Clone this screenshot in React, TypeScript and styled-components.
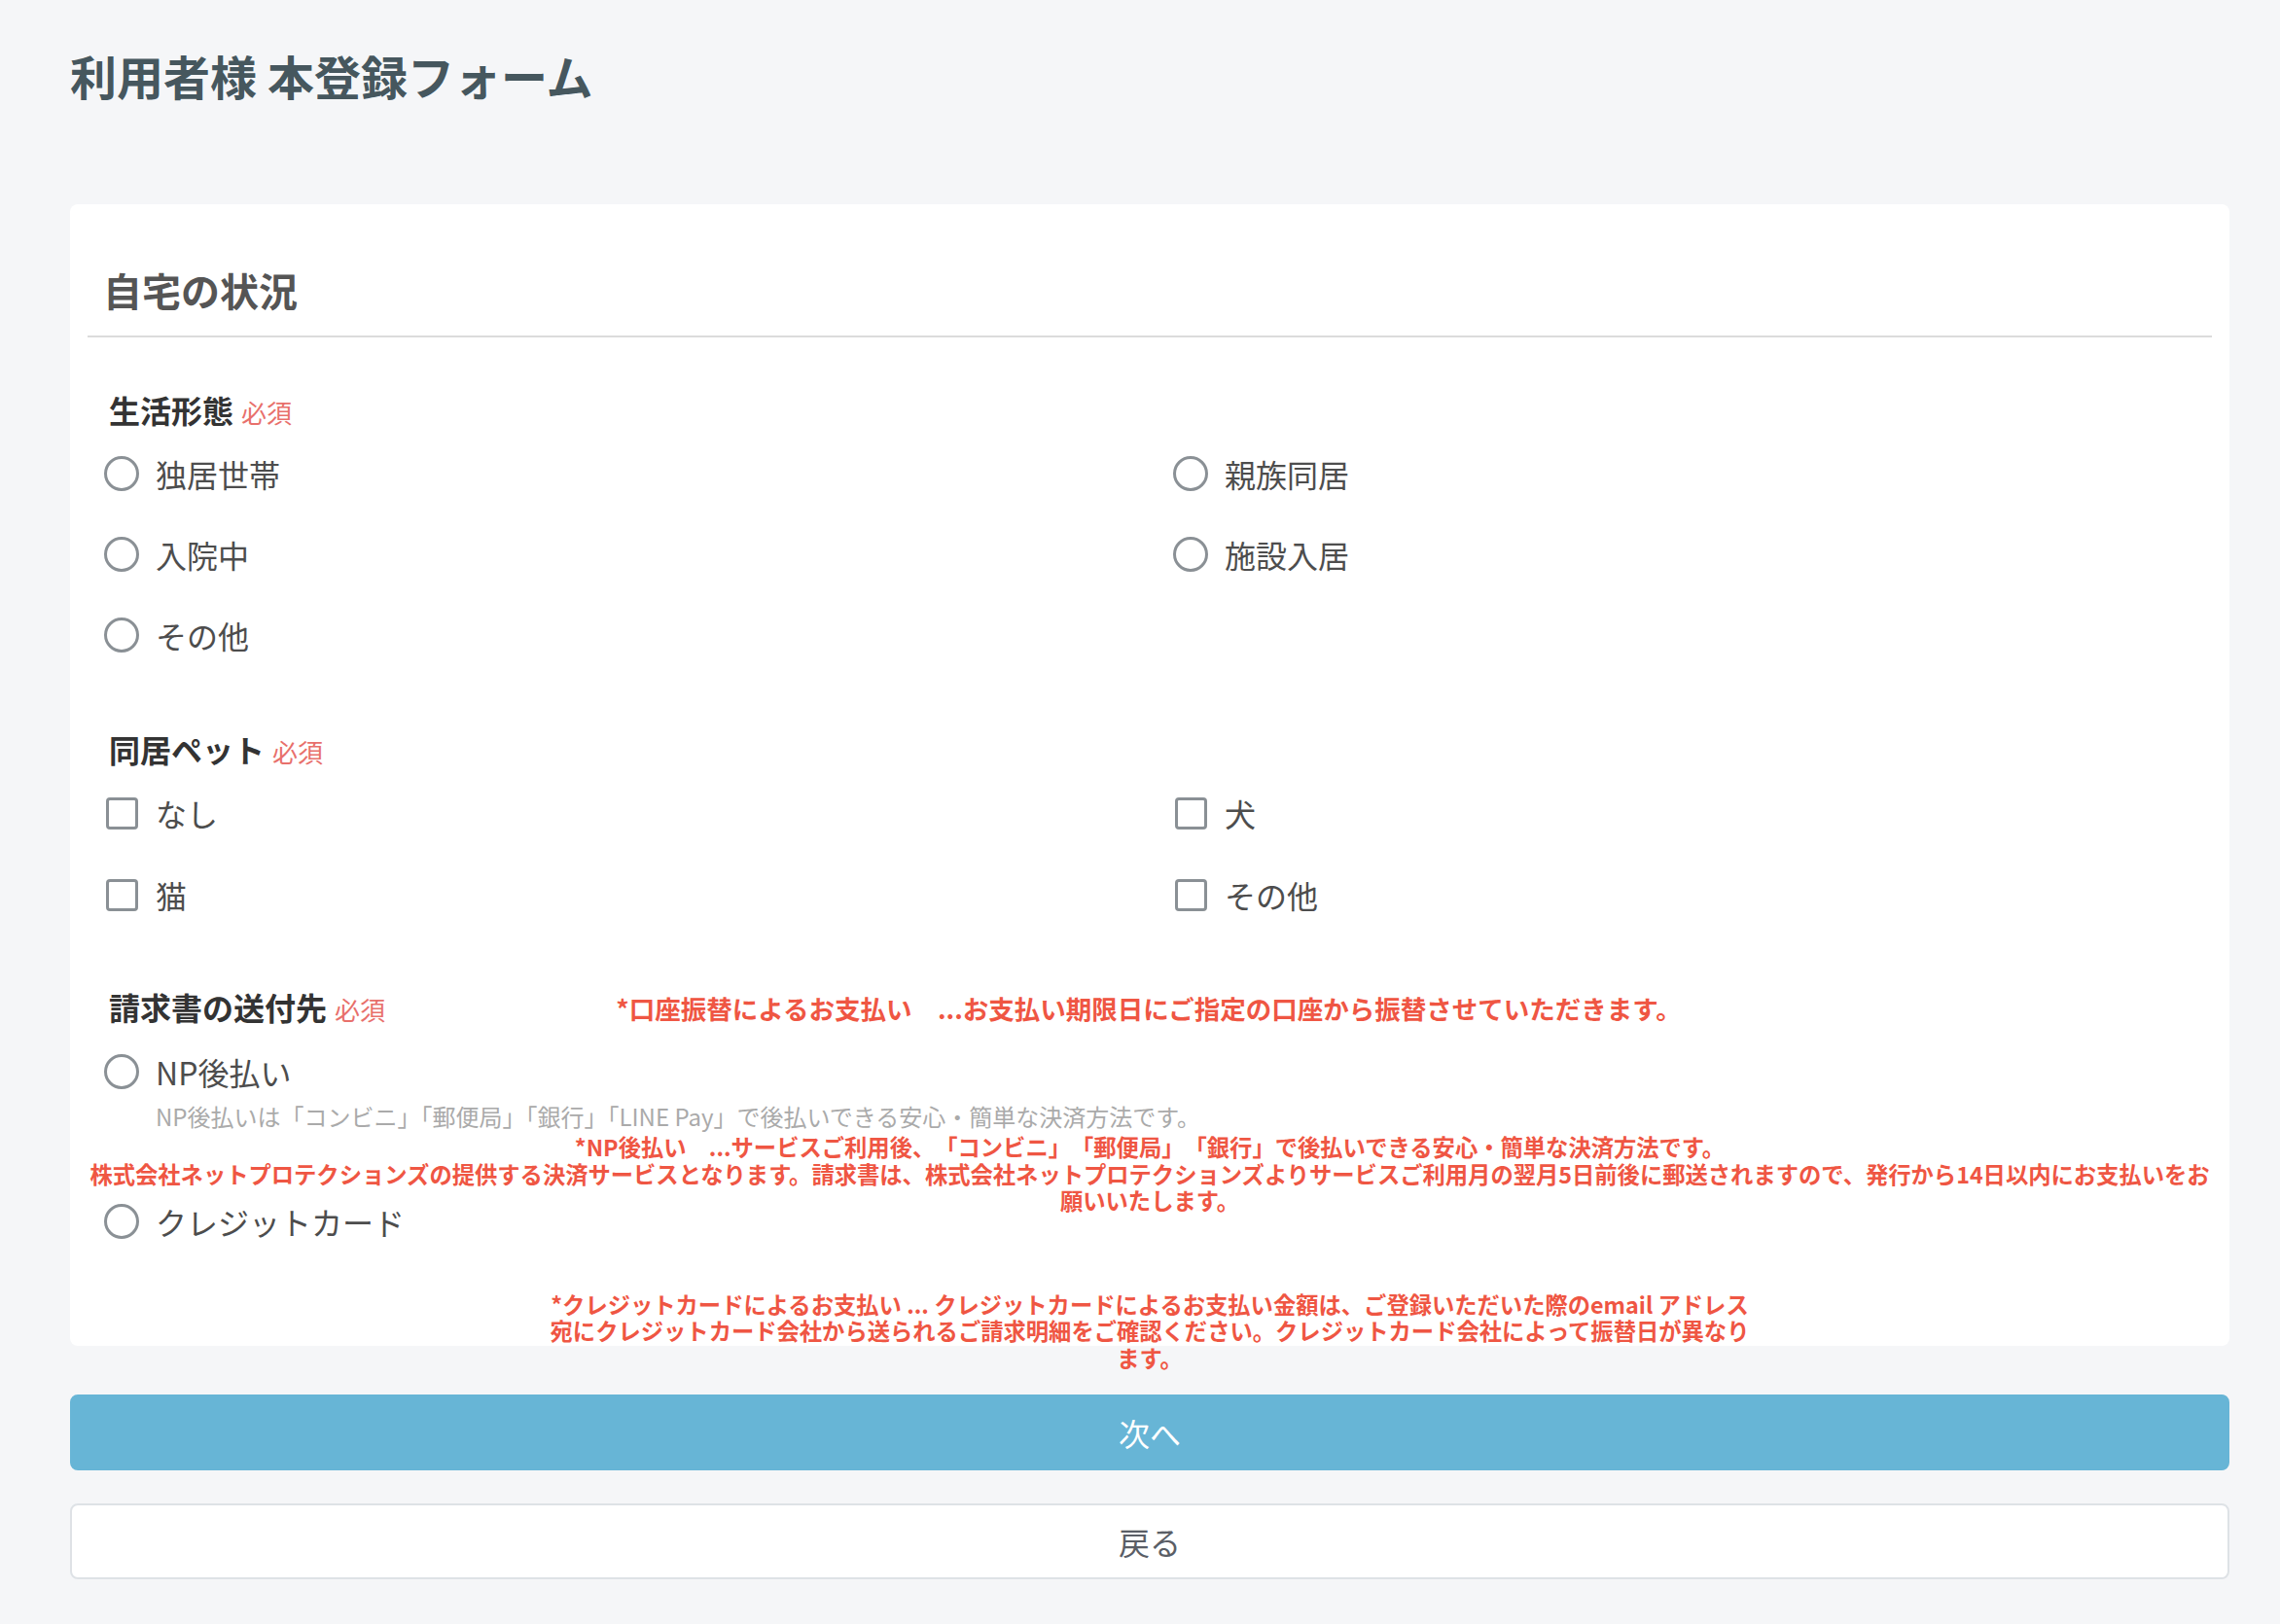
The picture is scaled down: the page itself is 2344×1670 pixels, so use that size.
import styled, { createGlobalStyle } from "styled-components";

const GlobalStyle = createGlobalStyle`
  * {
    box-sizing: border-box;
  }
  body {
    margin: 0;
    background: #f5f6f8;
    font-family: "Noto Sans CJK JP", "Noto Sans", sans-serif;
  }
`;

const Page = styled.div`
  padding: 48px 52px 46px 72px;
`;

const PageTitle = styled.h1`
  margin: 0 0 104px;
  font-size: 48px;
  line-height: 58px;
  font-weight: 700;
  color: #46575e;
`;

const Card = styled.section`
  height: 1174px;
  background: #fff;
  border-radius: 8px;
`;

const CardHeader = styled.div`
  margin: 0 18px;
  padding: 60px 16px 19px;
  border-bottom: 2px solid #dcdcdc;
`;

const CardTitle = styled.h2`
  margin: 0;
  font-size: 40px;
  line-height: 56px;
  font-weight: 700;
  color: #555;
`;

const CardBody = styled.div`
  padding: 0 35px;
`;

const Field = styled.div<{ $mt: number }>`
  margin-top: ${({ $mt }) => $mt}px;
`;

const FieldHead = styled.div`
  display: grid;
  align-items: center;
  margin-bottom: -1px;
  & > * {
    grid-area: 1 / 1;
  }
`;

const FieldLabel = styled.div`
  justify-self: start;
  padding-left: 5px;
  font-size: 32px;
  line-height: 44px;
  font-weight: 700;
  color: #333;
`;

const Required = styled.span`
  margin-left: 8px;
  font-size: 26px;
  font-weight: 400;
  color: #e8706b;
`;

const HeadNotice = styled.p`
  justify-self: center;
  margin: 0 2px 0 0;
  font-size: 26.5px;
  line-height: 44px;
  font-weight: 700;
  color: #ef5643;
  text-spacing-trim: space-all;
`;

const OptionGrid = styled.div<{ $row: number }>`
  display: grid;
  grid-template-columns: 1fr 1fr;
  grid-auto-rows: ${({ $row }) => $row}px;
  column-gap: 48px;
`;

const OptionList = styled.div`
  display: flex;
  flex-direction: column;
`;

const Option = styled.label<{ $h?: number; $mt?: number }>`
  display: flex;
  align-items: center;
  gap: 17px;
  height: ${({ $h }) => ($h ? `${$h}px` : "auto")};
  margin-top: ${({ $mt }) => $mt ?? 0}px;
  font-size: 32px;
  color: #4d4d4d;
  cursor: pointer;
`;

const Radio = styled.input.attrs({ type: "radio" })`
  appearance: none;
  flex: none;
  margin: 0;
  width: 36px;
  height: 36px;
  border: 3.5px solid #8a9095;
  border-radius: 50%;
  background: #fff;
`;

const CheckBox = styled.input.attrs({ type: "checkbox" })`
  appearance: none;
  flex: none;
  margin: 0 1px 0 2px;
  width: 33px;
  height: 33px;
  border: 3px solid #8a9095;
  border-radius: 4px;
  background: #fff;
`;

const OptionDesc = styled.p`
  margin: 0;
  padding-left: 53px;
  font-size: 24px;
  line-height: 28px;
  color: #aaa;
`;

const Notice = styled.p<{ $mt: number; $mb?: number; $width?: string }>`
  margin: ${({ $mt }) => $mt}px auto ${({ $mb }) => $mb ?? 0}px;
  width: ${({ $width }) => $width ?? "auto"};
  text-align: center;
  font-size: 23.3px;
  line-height: 27.5px;
  font-weight: 700;
  color: #ef5643;
  text-spacing-trim: space-all;
`;

const NpNotice = styled(Notice)`
  margin-left: -17px;
  margin-right: -17px;
`;

const Actions = styled.div`
  display: flex;
  flex-direction: column;
  gap: 34px;
  margin-top: 50px;
`;

const Button = styled.button<{ $primary?: boolean }>`
  height: 78px;
  border-radius: 8px;
  border: 2px solid ${({ $primary }) => ($primary ? "#67b5d6" : "#dee2e6")};
  background: ${({ $primary }) => ($primary ? "#67b5d6" : "#fff")};
  color: ${({ $primary }) => ($primary ? "#fff" : "#5a5e66")};
  font-family: inherit;
  font-size: 32px;
  cursor: pointer;
`;

const livingOptions = ["独居世帯", "親族同居", "入院中", "施設入居", "その他"];
const petOptions = ["なし", "犬", "猫", "その他"];

const App = () => {
  return (
    <Page>
      <GlobalStyle />
      <PageTitle>利用者様 本登録フォーム</PageTitle>
      <Card>
        <CardHeader>
          <CardTitle>自宅の状況</CardTitle>
        </CardHeader>
        <CardBody>
          <Field $mt={52}>
            <FieldHead>
              <FieldLabel>
                生活形態<Required>必須</Required>
              </FieldLabel>
            </FieldHead>
            <OptionGrid $row={83}>
              {livingOptions.map((o) => (
                <Option key={o}>
                  <Radio name="living" />
                  {o}
                </Option>
              ))}
            </OptionGrid>
          </Field>

          <Field $mt={54}>
            <FieldHead>
              <FieldLabel>
                同居ペット<Required>必須</Required>
              </FieldLabel>
            </FieldHead>
            <OptionGrid $row={84}>
              {petOptions.map((o) => (
                <Option key={o}>
                  <CheckBox />
                  {o}
                </Option>
              ))}
            </OptionGrid>
          </Field>

          <Field $mt={51}>
            <FieldHead>
              <FieldLabel>
                請求書の送付先<Required>必須</Required>
              </FieldLabel>
              <HeadNotice>
                *口座振替によるお支払い　...お支払い期限日にご指定の口座から振替させていただきます。
              </HeadNotice>
            </FieldHead>
            <OptionList>
              <Option $h={64} $mt={11}>
                <Radio name="billing" />
                NP後払い
              </Option>
              <OptionDesc>
                NP後払いは「コンビニ」「郵便局」「銀行」「LINE Pay」で後払いできる安心・簡単な決済方法です。
              </OptionDesc>
              <NpNotice $mt={4} $mb={-25}>
                *NP後払い　...サービスご利用後、「コンビニ」「郵便局」「銀行」で後払いできる安心・簡単な決済方法です。
                <br />
                株式会社ネットプロテクションズの提供する決済サービスとなります。請求書は、株式会社ネットプロテクションズよりサービスご利用月の翌月5日前後に郵送されますので、発行から14日以内にお支払いをお願いいたします。
              </NpNotice>
              <Option $h={64}>
                <Radio name="billing" />
                クレジットカード
              </Option>
              <Notice $mt={40} $width="1245px">
                *クレジットカードによるお支払い ... クレジットカードによるお支払い金額は、ご登録いただいた際のemail アドレス宛にクレジットカード会社から送られるご請求明細をご確認ください。クレジットカード会社によって振替日が異なります。
              </Notice>
            </OptionList>
          </Field>
        </CardBody>
      </Card>
      <Actions>
        <Button $primary>次へ</Button>
        <Button>戻る</Button>
      </Actions>
    </Page>
  );
};

export default App;
